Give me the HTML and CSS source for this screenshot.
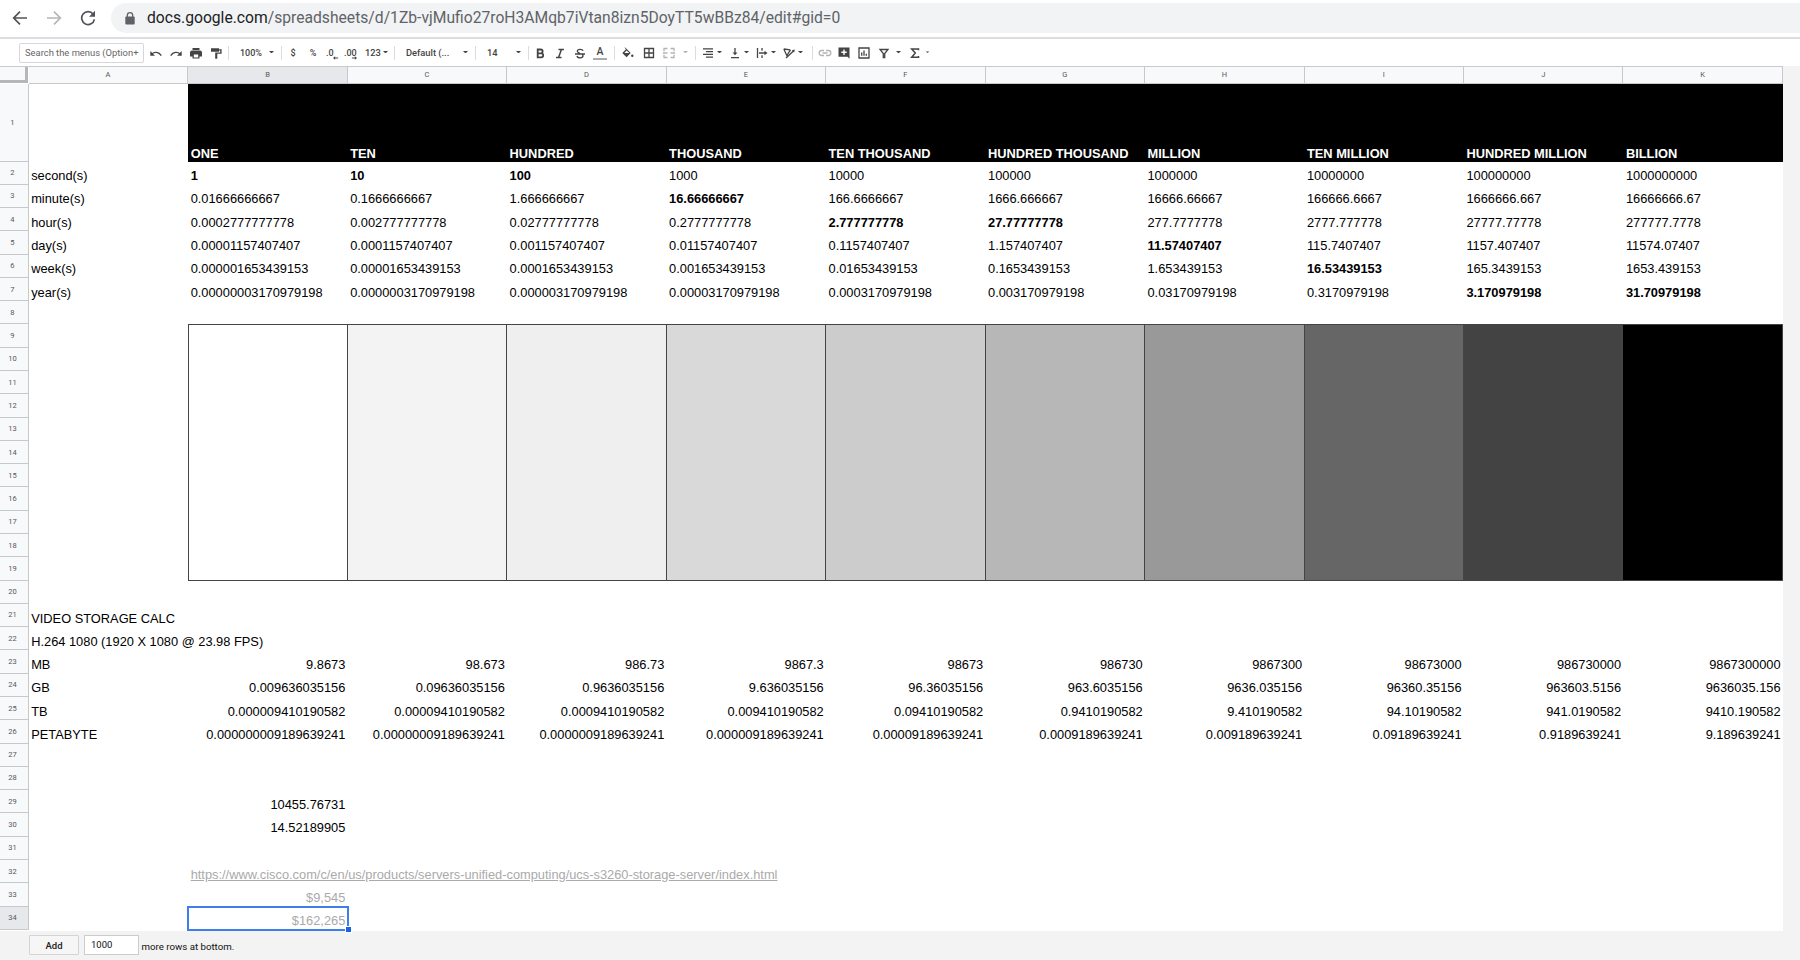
FILE: index.html
```
<!DOCTYPE html>
<html lang="en">
<head>
<meta charset="utf-8">
<title>Spreadsheet</title>
<link rel="stylesheet" href="styles.css">
</head>
<body>
<header class="browser">
  <div class="nav">
    <svg viewBox="0 0 16 16"><path d="M15 8H2M8 1.7L1.7 8 8 14.3"/></svg>
    <svg class="muted" viewBox="0 0 16 16"><path d="M1 8h13M8 1.7L14.3 8 8 14.3"/></svg>
    <svg viewBox="0 0 16 16"><path d="M13.2 4.2A6.4 6.4 0 1 0 14.4 9.3"/><path class="solid" d="M15 .8v6H9z"/></svg>
  </div>
  <div class="address">
    <svg class="lock" viewBox="0 0 10 13"><path d="M2.3 5V3.4a2.7 2.7 0 0 1 5.4 0V5" fill="none" stroke="#5f6368" stroke-width="1.3"/><rect x=".3" y="4.6" width="9.4" height="8" rx="1" fill="#5f6368"/></svg>
    <span class="url"><b>docs.google.com</b>/spreadsheets/d/1Zb-vjMufio27roH3AMqb7iVtan8izn5DoyTT5wBBz84/edit#gid=0</span>
  </div>
</header>

<nav class="toolbar">
  <div class="search">Search the menus (Option+</div>
  <div class="group g-history">
    <svg viewBox="0 0 14 14"><path class="line" d="M2.800 8C5.500 5.600 9.800 5.800 12.300 9.600"/><path d="M1.300 5v4.700h4.700z"/></svg>
    <svg viewBox="0 0 14 14"><path class="line" d="M11.200 8C8.500 5.600 4.200 5.800 1.700 9.600"/><path d="M12.700 5v4.700H8z"/></svg>
    <svg viewBox="0 0 14 14"><path d="M3.500 2h7v2h-7zM3 4.600h8a2 2 0 0 1 2 2v4h-2.500v2h-7v-2H1v-4a2 2 0 0 1 2-2zM4.800 8.600v2.800h4.400V8.600z" fill-rule="evenodd"/></svg>
    <svg viewBox="0 0 14 14"><path d="M2 2.200h8v1h2.600v4.600H8.300v4.900H6.200V6.500h5V4.500H10v1.300H2z"/></svg>
  </div>
  <div class="group g-zoom"><span>100%</span><i class="arrow"></i></div>
  <div class="group g-format">
    <span class="cell14">$</span><span class="cell14">%</span>
    <span class="decimal less">.0<svg viewBox="0 0 7 4"><path d="M0 2l2.500-2v1.400H6v1.200H2.500V4z"/></svg></span>
    <span class="decimal more">.00<svg viewBox="0 0 7 4"><path d="M7 2L4.500 0v1.400H1v1.200h3.500V4z"/></svg></span>
    <span class="numfmt">123</span><i class="arrow"></i>
  </div>
  <div class="group g-font"><span>Default (...</span><i class="arrow"></i></div>
  <div class="group g-size"><span>14</span><i class="arrow"></i></div>
  <div class="group g-text">
    <svg viewBox="0 0 14 14"><path class="line w18" d="M4.700 3.500h3a1.900 1.900 0 0 1 0 3.800h-3zM4.700 7.300h3.500a2 2 0 0 1 0 4H4.700z"/></svg>
    <svg viewBox="0 0 14 14"><path class="line w15" d="M5.500 3.500H11M3 11.500h5.500M8.400 3.500l-2.800 8"/></svg>
    <svg viewBox="0 0 14 14"><path class="line" d="M2 8h10M10 5C9.600 2.900 4.300 2.900 4.300 5.300c0 1.300 1.500 1.700 2.700 2M4 10c.5 2.400 6 2.400 6-.2 0-.8-.4-1.300-1-1.800"/></svg>
    <span class="color">A</span>
  </div>
  <div class="group g-cells">
    <svg viewBox="0 0 14 14"><path d="M4.200 1.500L9.700 7 5.500 11.200 1.300 7 5 3.300 3.500 1.800zM5.700 4.500L3.300 7h5z" fill-rule="evenodd"/><circle cx="11.300" cy="9.700" r="1.200"/></svg>
    <svg viewBox="0 0 14 14"><path class="line" d="M2.500 2.500h9v9h-9zM7 2.500v9M2.500 7h9"/></svg>
    <svg class="faded" viewBox="0 0 14 14"><path class="line" d="M5.500 2.500H2v2.700M8.500 2.500H12v2.700M5.500 11.500H2V8.800M8.500 11.500H12V8.800M1 7h4.500M8.500 7H13"/></svg>
    <i class="arrow faded"></i>
  </div>
  <div class="group g-align">
    <svg viewBox="0 0 14 14"><path class="line" d="M2 2.800h10M5 5.600h7M2 8.400h10M5 11.200h7"/></svg><i class="arrow"></i>
    <svg viewBox="0 0 14 14"><path class="line" d="M3 11.600h8M7 2v5"/><path d="M4.500 6.500h5L7 9.300z"/></svg><i class="arrow"></i>
    <svg viewBox="0 0 14 14"><path class="line" d="M2.500 2v10M7 2v2.700M7 9.300V12M4 7h6"/><path d="M9.500 4.700v4.600L12.500 7z"/></svg><i class="arrow"></i>
    <svg viewBox="0 0 14 14"><path class="line" d="M1.800 3l3 6.500L8.500 3.800M1.800 3l6.500.8M4 12l8-7.500"/><path d="M12.800 3.500l-.7 3-2.300-2.300z"/></svg><i class="arrow"></i>
  </div>
  <div class="group g-insert">
    <svg class="faded" viewBox="0 0 14 14"><path class="line" d="M6 4.500H3.700a2.500 2.500 0 0 0 0 5H6M8 4.500h2.300a2.500 2.500 0 0 1 0 5H8M4.500 7h5"/></svg>
    <svg viewBox="0 0 14 14"><path d="M1.500 1.500h11v11.300l-2-2h-9zM6.300 3.500v2h-2v1.400h2v2h1.400v-2h2V5.500h-2v-2z" fill-rule="evenodd"/></svg>
    <svg viewBox="0 0 14 14"><path class="line" d="M2 2h10v10H2zM4.700 6.500v3.200M7 4.500v5.200M9.300 7.800v1.900"/></svg>
    <svg viewBox="0 0 14 14"><path class="line" d="M3 3.500h8L7.700 7.500v4H6.300v-4z"/></svg><i class="arrow"></i>
    <svg class="sum" viewBox="0 0 14 14"><path class="line w15" d="M10.500 4.200V3H3.700L7.300 7l-3.600 4.200h6.800V10"/></svg><i class="arrow small"></i>
  </div>
</nav>

<main class="sheet" id="sheet"></main>

<footer class="addrows">
  <button class="add">Add</button>
  <div class="count">1000</div>
  <span class="label">more rows at bottom.</span>
</footer>
<script src="sheet.js"></script>
</body>
</html>
```

FILE: styles.css
```
* { box-sizing: border-box; }
body { margin: 0; width: 1800px; height: 960px; overflow: hidden; background: #f3f3f3; font-family: Roboto, sans-serif; display: flex; flex-direction: column; }

.browser { flex: none; height: 39px; background: #fff; border-bottom: 2px solid #dcdde1; display: flex; padding-top: 3px; }
.nav { width: 111px; height: 30px; padding-left: 12px; display: flex; gap: 18px; align-items: center; }
.nav svg { width: 16px; height: 16px; fill: none; stroke: #505357; stroke-width: 1.7; }
.nav .solid { fill: #505357; stroke: none; }
.nav .muted { stroke: #b4b6b8; }
.address { flex: 1; height: 30px; border-radius: 15px 0 0 15px; background: #f1f3f4; display: flex; align-items: center; padding-left: 14px; }
.lock { width: 10px; height: 13px; margin-right: 12px; }
.url { font-size: 15.660px; line-height: 30px; color: #5f6368; white-space: nowrap; }
.url b { font-weight: 400; color: #202124; }

.toolbar { flex: none; height: 27px; background: #fff; display: flex; align-items: center; padding: 0 0 0 19px; color: #444; font-size: 9px; font-weight: 500; }
.search { width: 125px; height: 20px; border: 1px solid #d5d7da; border-radius: 2px; padding: 0 0 0 5px; font-size: 9.400px; font-weight: 400; line-height: 18px; color: #666; white-space: nowrap; }
.group { height: 14px; display: flex; align-items: center; flex: none; white-space: nowrap; }
.group + .group { border-left: 1px solid #dadce0; }
.group svg { width: 14px; height: 14px; flex: none; fill: #444; }
.line { fill: none; stroke: #444; stroke-width: 1.300; }
.w15 { stroke-width: 1.500; }
.w18 { stroke-width: 1.800; }
.faded { opacity: .4; }
.arrow { border: 2.500px solid transparent; border-top-color: #444; border-bottom: 0; width: 5px; height: 3px; flex: none; }
.g-history { width: 84px; padding-left: 5px; gap: 6px; }
.g-zoom { width: 53px; padding-left: 11px; gap: 7px; }
.g-zoom span { width: 22px; }
.g-format { width: 113px; padding-left: 4px; }
.cell14 { width: 14px; margin-right: 6px; text-align: center; }
.decimal { position: relative; width: 14px; }
.group .decimal svg { position: absolute; right: 1px; bottom: -2px; width: 6px; height: 4px; }
.less { margin-right: 4px; }
.more { margin-right: 7px; }
.numfmt { width: 17px; margin-right: 1px; font-size: 9.300px; }
.g-font { width: 81px; padding-left: 11px; font-size: 9.300px; }
.g-font span { width: 57px; }
.g-size { width: 53px; padding-left: 11px; font-size: 9.300px; }
.g-size span { width: 29px; }
.g-text { width: 86px; padding-left: 4px; gap: 6px; }
.color { width: 14px; height: 14px; border-bottom: 2px solid #aaa; font-size: 10.500px; line-height: 11px; text-align: center; }
.g-cells { width: 81px; padding-left: 6px; gap: 6.700px; }
.g-align { width: 117px; padding-left: 5px; }
.g-align svg { margin-right: 2px; }
.g-align .arrow { margin-right: 6px; }
.g-insert { padding-left: 4.500px; gap: 5.700px; }
.g-insert .sum { margin-left: 1px; }
.small { transform: scale(.7); margin-left: -3px; }

.sheet { flex: none; width: 1783.400px; height: 864.500px; background: #fff; display: grid; grid-template-columns: 28.800px repeat(11, 159.470px); grid-template-rows: 17px 77.500px repeat(33, 23.290px); font: 12.840px "Liberation Sans", Arial, sans-serif; color: #000; border-top: 1px solid #c8cacc; }
.head { font: 7.500px/9px Roboto, sans-serif; color: #55585c; background: #f8f9fa; border: 0 solid #c6c8ca; display: flex; align-items: center; justify-content: center; }
.col { border-width: 0 1px 1px 0; padding-bottom: 1px; }
.row { border-width: 0 1px 1px 0; padding-right: 3px; }
.corner { border: solid #b7b7b7; border-width: 0 3px 3px 0; margin: 0 1px 1px 0; }
.head.active { background: #e6e8eb; }
.cell { position: relative; display: flex; align-items: flex-end; padding: 0 2.400px 1.600px; line-height: 15px; white-space: nowrap; min-width: 0; }
.right { justify-content: flex-end; }
.bold { font-weight: 700; }
.title { background: #000; color: #fff; font-weight: 700; padding-bottom: 1px; }
.band { border-right: 1px solid #444; }
.band.first { border-left: 1px solid #444; }
.band.top { border-top: 1px solid #444; }
.band.bottom { border-bottom: 1px solid #444; }
.grey { color: #aaa; }
.link { text-decoration: underline; }
.selected { outline: 2px solid #3f7de8; outline-offset: -1px; }
.handle { position: absolute; right: -3px; bottom: -2px; width: 5px; height: 5px; background: #1a62e0; box-shadow: 0 0 0 1px #fff; }

.addrows { height: 29px; display: flex; align-items: flex-start; padding: 4.500px 0 0 29px; font-size: 10px; color: #111; }
.add { width: 50px; height: 20px; padding: 0; border: 1px solid #d4d4d4; border-radius: 1px; background: #f6f6f6; font: 500 9.500px Roboto, sans-serif; color: #222; margin-right: 5px; }
.count { width: 55px; height: 20px; border: 1px solid #ccc; background: #fff; padding-left: 6px; line-height: 18px; font-size: 9.500px; margin-right: 2.500px; }
.label { line-height: 24px; font-size: 9.700px; }
```

FILE: sheet.js
```
const columns = 'ABCDEFGHIJK';
const bands = ['#ffffff', '#f3f3f3', '#efefef', '#d9d9d9', '#cccccc', '#b7b7b7', '#999999', '#666666', '#434343', '#000000'];
const rows = {
  1: '|ONE|TEN|HUNDRED|THOUSAND|TEN THOUSAND|HUNDRED THOUSAND|MILLION|TEN MILLION|HUNDRED MILLION|BILLION',
  2: 'second(s)|*1|*10|*100|1000|10000|100000|1000000|10000000|100000000|1000000000',
  3: 'minute(s)|0.01666666667|0.1666666667|1.666666667|*16.66666667|166.6666667|1666.666667|16666.66667|166666.6667|1666666.667|16666666.67',
  4: 'hour(s)|0.0002777777778|0.002777777778|0.02777777778|0.2777777778|*2.777777778|*27.77777778|277.7777778|2777.777778|27777.77778|277777.7778',
  5: 'day(s)|0.00001157407407|0.0001157407407|0.001157407407|0.01157407407|0.1157407407|1.157407407|*11.57407407|115.7407407|1157.407407|11574.07407',
  6: 'week(s)|0.000001653439153|0.00001653439153|0.0001653439153|0.001653439153|0.01653439153|0.1653439153|1.653439153|*16.53439153|165.3439153|1653.439153',
  7: 'year(s)|0.00000003170979198|0.0000003170979198|0.000003170979198|0.00003170979198|0.0003170979198|0.003170979198|0.03170979198|0.3170979198|*3.170979198|*31.70979198',
  21: 'VIDEO STORAGE CALC',
  22: 'H.264 1080 (1920 X 1080 @ 23.98 FPS)',
  23: 'MB|9.8673|98.673|986.73|9867.3|98673|986730|9867300|98673000|986730000|9867300000',
  24: 'GB|0.009636035156|0.09636035156|0.9636035156|9.636035156|96.36035156|963.6035156|9636.035156|96360.35156|963603.5156|9636035.156',
  25: 'TB|0.000009410190582|0.00009410190582|0.0009410190582|0.009410190582|0.09410190582|0.9410190582|9.410190582|94.10190582|941.0190582|9410.190582',
  26: 'PETABYTE|0.000000009189639241|0.00000009189639241|0.0000009189639241|0.000009189639241|0.00009189639241|0.0009189639241|0.009189639241|0.09189639241|0.9189639241|9.189639241',
  29: '|10455.76731',
  30: '|14.52189905',
  32: '|https://www.cisco.com/c/en/us/products/servers-unified-computing/ucs-s3260-storage-server/index.html',
  33: '|$9,545',
  34: '|$162,265'
};

const sheet = document.getElementById('sheet');
function add(className, text) {
  const el = document.createElement('div');
  el.className = className;
  el.textContent = text;
  sheet.append(el);
  return el;
}

add('head corner', '');
for (const c of columns) add('head col' + (c === 'B' ? ' active' : ''), c);

for (let r = 1; r <= 34; r++) {
  add('head row' + (r === 34 ? ' active' : ''), r);
  const values = (rows[r] || '').split('|');
  for (let c = 0; c < 11; c++) {
    let text = values[c] || '';
    let cls = 'cell';
    if (text[0] === '*') { cls += ' bold'; text = text.slice(1); }
    if (r === 1 && c) cls += ' title';
    if (r > 22 && r !== 32 && c) cls += ' right';
    if (r >= 32) cls += ' grey';
    if (r === 32 && c) cls += ' link';
    const inBand = r >= 9 && r <= 19 && c > 0;
    if (inBand) {
      cls += ' band';
      if (c === 1) cls += ' first';
      if (r === 9) cls += ' top';
      if (r === 19) cls += ' bottom';
    }
    const el = add(cls, text);
    if (inBand) el.style.backgroundColor = bands[c - 1];
    if (r === 34 && c === 1) {
      el.classList.add('selected');
      const handle = document.createElement('i');
      handle.className = 'handle';
      el.append(handle);
    }
  }
}
```
